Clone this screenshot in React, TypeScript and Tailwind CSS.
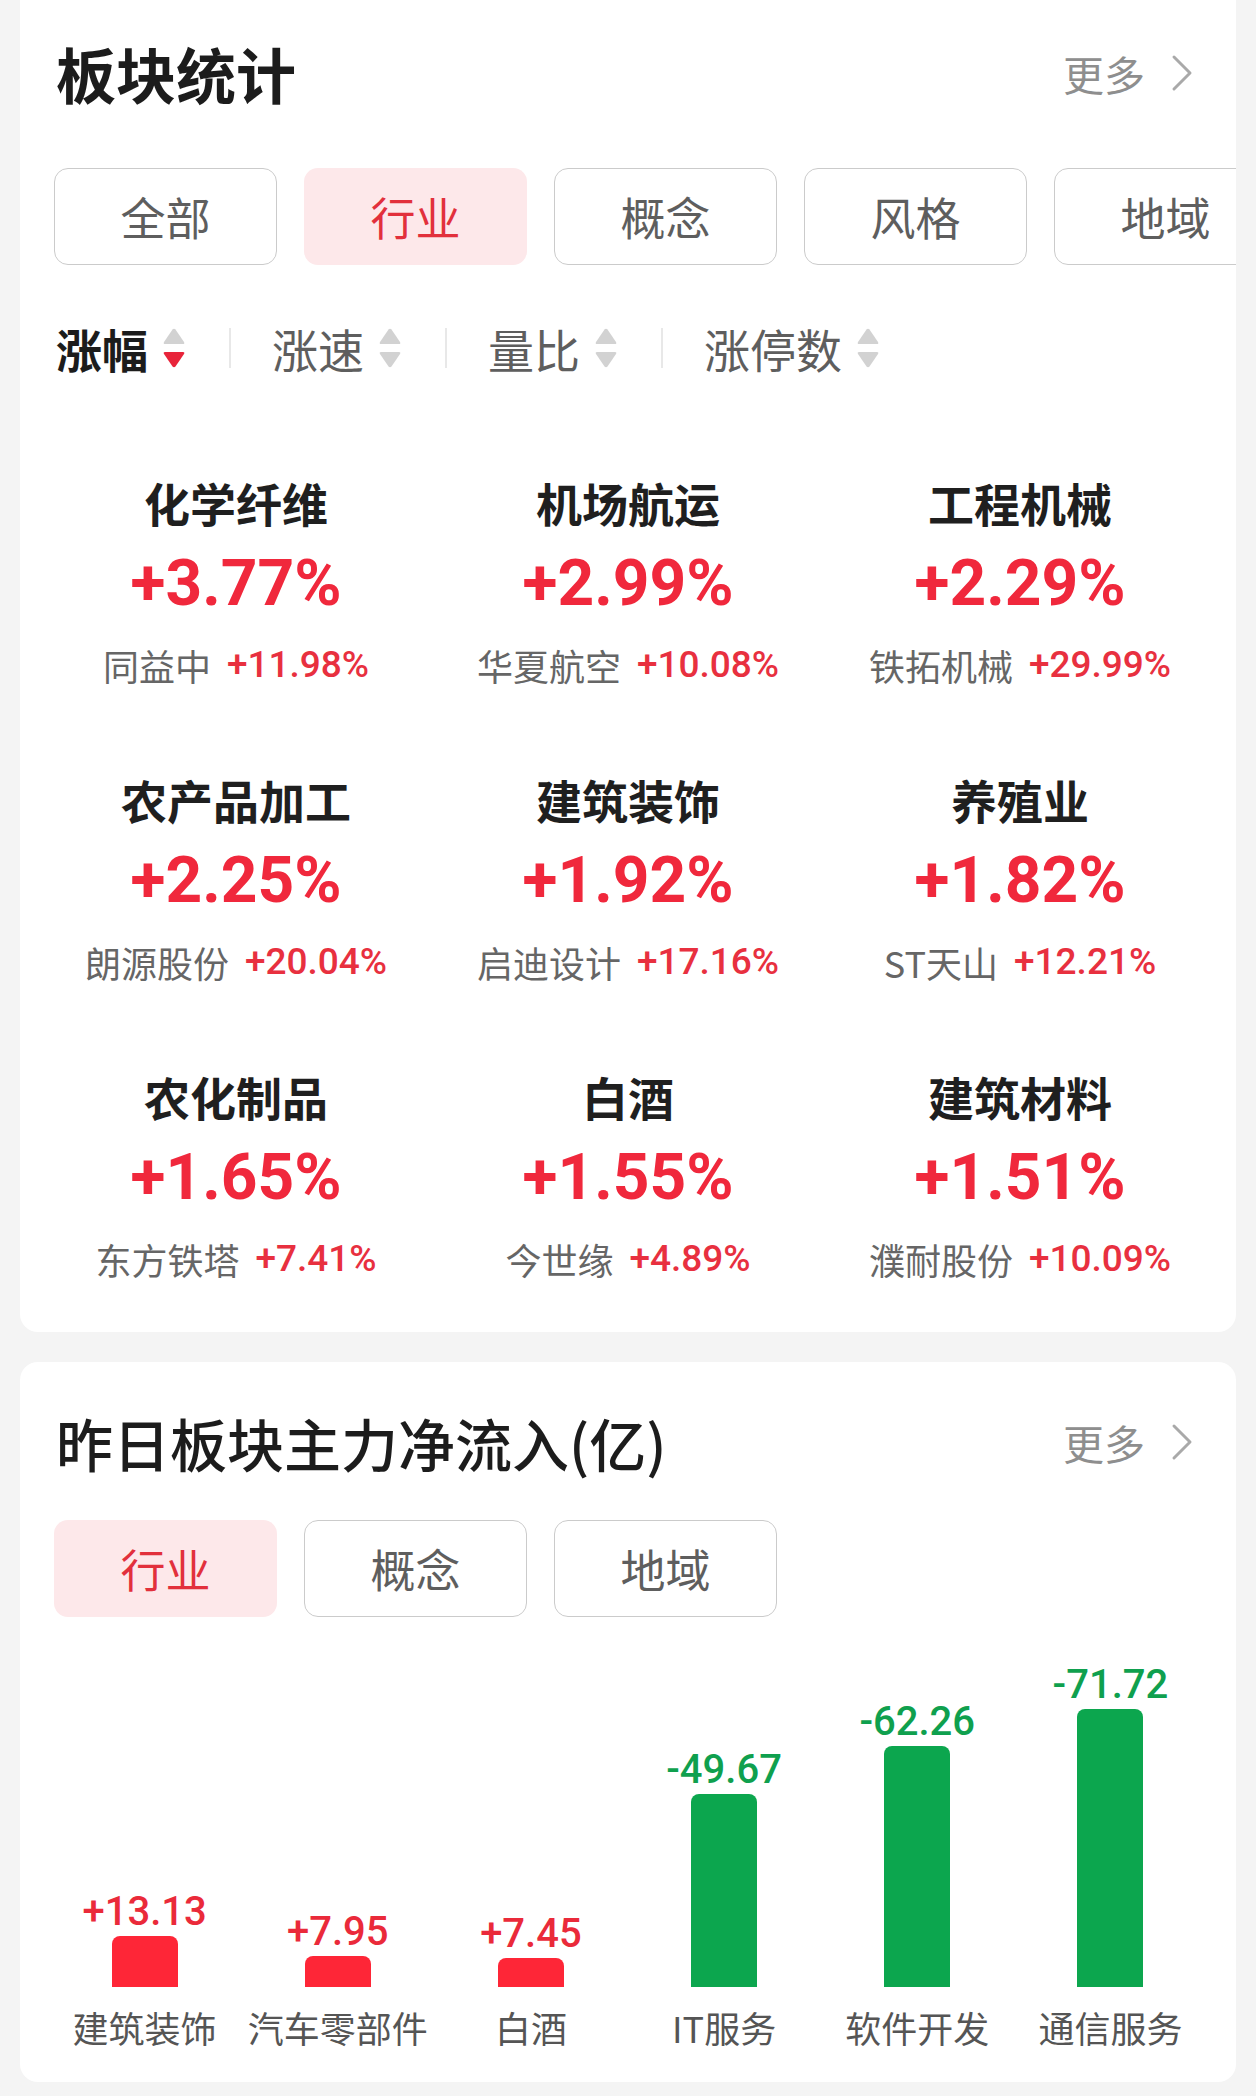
import React from "react";

const CJK = "font-['Noto_Sans_CJK_SC','Noto_Sans',sans-serif]";
const NUM = "font-['Roboto','Noto_Sans_CJK_SC',sans-serif]";

const sectors = [
  { name: "化学纤维", pct: "+3.77%", stock: "同益中", sp: "+11.98%" },
  { name: "机场航运", pct: "+2.99%", stock: "华夏航空", sp: "+10.08%" },
  { name: "工程机械", pct: "+2.29%", stock: "铁拓机械", sp: "+29.99%" },
  { name: "农产品加工", pct: "+2.25%", stock: "朗源股份", sp: "+20.04%" },
  { name: "建筑装饰", pct: "+1.92%", stock: "启迪设计", sp: "+17.16%" },
  { name: "养殖业", pct: "+1.82%", stock: "ST天山", sp: "+12.21%" },
  { name: "农化制品", pct: "+1.65%", stock: "东方铁塔", sp: "+7.41%" },
  { name: "白酒", pct: "+1.55%", stock: "今世缘", sp: "+4.89%" },
  { name: "建筑材料", pct: "+1.51%", stock: "濮耐股份", sp: "+10.09%" },
];

const flows = [
  { name: "建筑装饰", v: 13.13, label: "+13.13" },
  { name: "汽车零部件", v: 7.95, label: "+7.95" },
  { name: "白酒", v: 7.45, label: "+7.45" },
  { name: "IT服务", v: -49.67, label: "-49.67" },
  { name: "软件开发", v: -62.26, label: "-62.26" },
  { name: "通信服务", v: -71.72, label: "-71.72" },
];

function Chevron() {
  return (
    <svg width="22" height="38" viewBox="0 0 22 38" className="ml-[26px]">
      <polyline
        points="3,3 19,19 3,35"
        fill="none"
        stroke="#a9a9a9"
        strokeWidth="3"
        strokeLinecap="round"
        strokeLinejoin="round"
      />
    </svg>
  );
}

function Header({ title, cls }: { title: string; cls: string }) {
  return (
    <div className="flex h-[58px] items-center justify-between pl-[36px] pr-[43px]">
      <div className={`${CJK} ${cls} leading-[58px] text-[#1c1c1c]`}>{title}</div>
      <div className="flex items-center">
        <span className={`${CJK} text-[41px] leading-[58px] text-[#8e8e8e]`}>更多</span>
        <Chevron />
      </div>
    </div>
  );
}

function Tabs({ items, active }: { items: string[]; active: string }) {
  return (
    <div className="flex gap-[27px] overflow-hidden pl-[34px]">
      {items.map((t) => {
        const on = t === active;
        return (
          <div
            key={t}
            className={`flex h-[97px] w-[223px] shrink-0 items-center justify-center rounded-[14px] ${CJK} text-[45px] ${
              on
                ? "bg-[#fde8ea] text-[#e2303c]"
                : "border-[1.5px] border-[#cbcbcb] bg-white text-[#5e5e5e]"
            }`}
          >
            {t}
          </div>
        );
      })}
    </div>
  );
}

function SortIcon({ active }: { active?: boolean }) {
  return (
    <svg width="22" height="40" viewBox="0 0 22 40" className="ml-[15px]">
      <path d="M9.5 1.5 Q11 0 12.5 1.5 L21 14 Q22 16 20 16 L2 16 Q0 16 1 14 Z" fill="#d2d2d2" />
      <path
        d="M9.5 38.5 Q11 40 12.5 38.5 L21 26 Q22 24 20 24 L2 24 Q0 24 1 26 Z"
        fill={active ? "#e8243a" : "#d2d2d2"}
      />
    </svg>
  );
}

function Divider() {
  return <div className="ml-[44px] mr-[41px] h-[40px] w-[2px] bg-[#e8e8e8]" />;
}

export default function App() {
  return (
    <div className="h-[2096px] w-[1256px] overflow-hidden bg-[#f4f4f4] px-5">
      {/* Card 1 */}
      <div className="overflow-hidden rounded-b-[18px] bg-white pb-[51px] pt-[44px]">
        <Header title="板块统计" cls="text-[60px] font-bold" />
        <div className="mt-[66px]">
          <Tabs items={["全部", "行业", "概念", "风格", "地域"]} active="行业" />
        </div>
        <div className={`mt-[60px] flex h-[46px] items-center pl-[36px] ${CJK} text-[46px] leading-[46px]`}>
          <span className="font-bold text-[#1c1c1c]">涨幅</span>
          <SortIcon active />
          <Divider />
          <span className="text-[#5e5e5e]">涨速</span>
          <SortIcon />
          <Divider />
          <span className="text-[#5e5e5e]">量比</span>
          <SortIcon />
          <Divider />
          <span className="text-[#5e5e5e]">涨停数</span>
          <SortIcon />
        </div>
        <div className="mt-[103px] grid grid-cols-3 gap-y-[84px] px-5">
          {sectors.map((s) => (
            <div key={s.name} className="flex flex-col items-center">
              <div className={`${CJK} text-[46px] font-bold leading-[56px] text-[#1f1f1f]`}>{s.name}</div>
              <div className={`${NUM} mt-[18px] text-[64px] font-bold leading-[72px] text-[#f0283c]`}>{s.pct}</div>
              <div className="mt-[23px] flex h-[44px] items-center">
                <span className={`${CJK} text-[36px] leading-[44px] text-[#666666]`}>{s.stock}</span>
                <span className={`${NUM} ml-[16px] text-[37px] font-medium leading-[44px] text-[#e8303f]`}>{s.sp}</span>
              </div>
            </div>
          ))}
        </div>
      </div>

      {/* Card 2 */}
      <div className="mt-[30px] overflow-hidden rounded-[18px] bg-white pb-[33px] pt-[51px]">
        <Header title="昨日板块主力净流入(亿)" cls="text-[57px] font-medium" />
        <div className="mt-[49px]">
          <Tabs items={["行业", "概念", "地域"]} active="行业" />
        </div>
        <div className="flex pl-[28px] pr-[29px]">
          {flows.map((f) => {
            const up = f.v > 0;
            return (
              <div key={f.name} className="flex flex-1 flex-col items-center">
                <div className="flex h-[370px] flex-col items-center justify-end">
                  <div
                    className={`${NUM} mb-[4px] text-[40px] font-medium leading-[40px] ${
                      up ? "text-[#ea2a3a]" : "text-[#0fa04e]"
                    }`}
                  >
                    {f.label}
                  </div>
                  <div
                    className={`w-[66px] rounded-t-[8px] ${up ? "bg-[#fe2637]" : "bg-[#0ca64e]"}`}
                    style={{ height: `${Math.round(Math.abs(f.v) * 3.876)}px` }}
                  />
                </div>
                <div className={`${CJK} mt-[18px] whitespace-nowrap text-[36px] leading-[44px] text-[#555555]`}>
                  {f.name}
                </div>
              </div>
            );
          })}
        </div>
      </div>
    </div>
  );
}
